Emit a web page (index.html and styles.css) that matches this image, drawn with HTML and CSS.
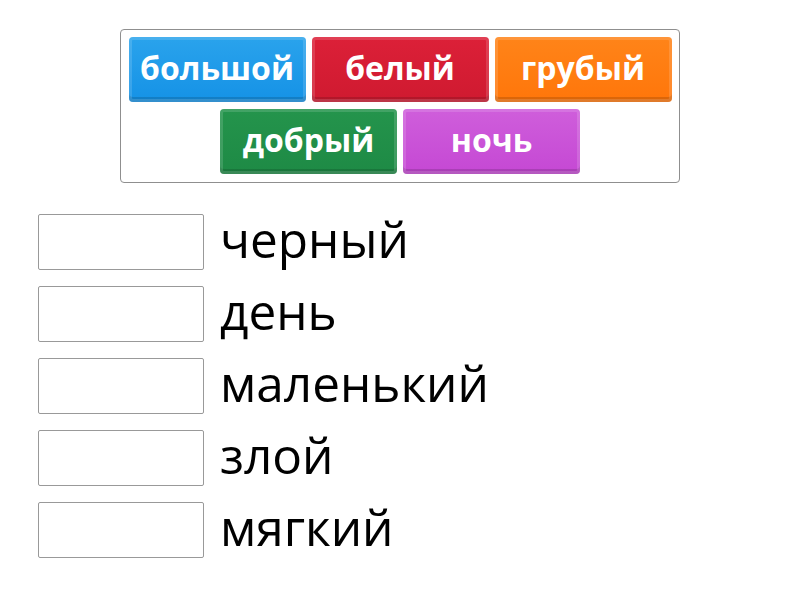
FILE: index.html
```html
<!DOCTYPE html>
<html lang="ru">
<head>
<meta charset="utf-8">
<link rel="stylesheet" href="styles.css">
</head>
<body>
<div class="page">
  <div class="bank">
    <div class="tile blue">большой</div>
    <div class="tile red">белый</div>
    <div class="tile orange">грубый</div>
    <div class="tile green">добрый</div>
    <div class="tile purple">ночь</div>
  </div>
  <div class="rows">
    <div class="row"><div class="slot"></div><div class="label">черный</div></div>
    <div class="row"><div class="slot"></div><div class="label">день</div></div>
    <div class="row"><div class="slot"></div><div class="label">маленький</div></div>
    <div class="row"><div class="slot"></div><div class="label">злой</div></div>
    <div class="row"><div class="slot"></div><div class="label">мягкий</div></div>
  </div>
</div>
</body>
</html>
```
FILE: styles.css
```css
html, body {
  margin: 0;
  padding: 0;
  background: #fff;
}
body {
  font-family: "Open Sans", "Liberation Sans", sans-serif;
  color: #000;
}
.page {
  padding-top: 29px;
}
.bank {
  box-sizing: border-box;
  width: 560px;
  margin-left: 120px;
  border: 1px solid #8f8f8f;
  border-radius: 4px;
  padding: 7px 7px 8px 7px;
  display: flex;
  flex-wrap: wrap;
  justify-content: center;
  gap: 7px 6px;
}
.tile {
  box-sizing: border-box;
  width: 177px;
  height: 65px;
  border-radius: 4px;
  display: flex;
  align-items: center;
  justify-content: center;
  color: #fff;
  font-weight: 700;
  font-size: 32px;
  padding-bottom: 5px;
  box-shadow: inset 0 0 0 3px rgba(255,255,255,0.14), inset 0 -5px 0 rgba(0,0,0,0.14);
}
.blue { background: linear-gradient(#2aa3ec, #1592e6); }
.red { background: linear-gradient(#dc2038, #cf1a30); }
.orange { background: linear-gradient(#ff8419, #ff760a); }
.green { background: linear-gradient(#24944c, #1e8a45); }
.purple { background: linear-gradient(#cf5edb, #c548d4); }
.rows {
  margin-top: 31px;
  margin-left: 38px;
  display: flex;
  flex-direction: column;
  gap: 16px;
}
.row {
  display: flex;
  align-items: center;
  gap: 16px;
  height: 56px;
}
.slot {
  box-sizing: border-box;
  width: 166px;
  height: 56px;
  border: 1px solid #999;
  border-radius: 2px;
}
.label {
  font-size: 49.5px;
  line-height: 56px;
  padding-bottom: 6px;
}
```
